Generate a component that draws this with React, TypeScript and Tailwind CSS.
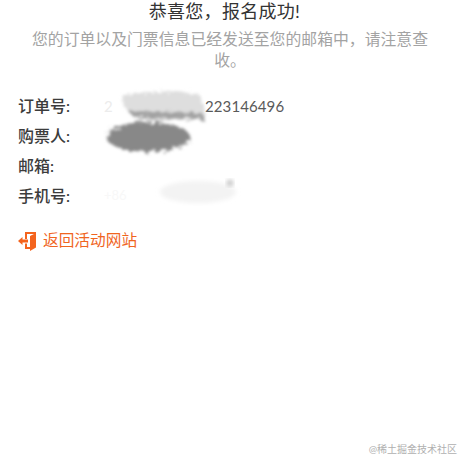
const cjk = "font-['Lato','Noto_Sans_CJK_SC',sans-serif]";

function ExitIcon() {
  return (
    <svg width="18" height="19" viewBox="0 0 18 19" className="mt-[2px] mr-[1px] shrink-0">
      {/* 门框 */}
      <path d="M7 0h11v2H9v5H7zM7 11.5h2V15h3v2H7z" fill="#f4641e" />
      {/* 门板 */}
      <path d="M18 1v14.5L12 19V4z" fill="#f4641e" />
      {/* 箭头 */}
      <path d="M0 9 4.5 5V7.5H10v3H4.5V13z" fill="#f4641e" />
    </svg>
  );
}

function Row({ label, children }: { label: string; children?: React.ReactNode }) {
  return (
    <div className="flex h-[30px] items-center">
      <span className="w-[86px] font-medium text-[#3c3c3c]">{label}</span>
      {children}
    </div>
  );
}

// 截图里的打码涂抹
function Smudges() {
  return (
    <svg width="460" height="460" className="absolute top-0 left-0">
      <defs>
        <filter id="rough" x="-20%" y="-40%" width="140%" height="180%">
          <feTurbulence type="fractalNoise" baseFrequency="0.18 0.35" numOctaves="3" seed="4" result="n" />
          <feDisplacementMap in="SourceGraphic" in2="n" scale="10" />
          <feGaussianBlur stdDeviation="1.5" />
        </filter>
        <filter id="soft">
          <feGaussianBlur stdDeviation="2" />
        </filter>
      </defs>
      <g filter="url(#rough)">
        <path d="M124 95 Q165 88 200 95 L207 120 L140 120 Q120 110 124 95z" fill="#dedede" />
        <path d="M128 111 L203 113 L204 119 L134 117z" fill="#a2a2a2" />
        <ellipse cx="148" cy="137" rx="42" ry="15" fill="#888888" />
      </g>
      <g filter="url(#soft)">
        <ellipse cx="198" cy="192" rx="38" ry="11" fill="#f3f3f3" />
      </g>
      <circle cx="230" cy="183" r="3.5" fill="#c8c8c8" filter="url(#soft)" />
    </svg>
  );
}

export default function App() {
  return (
    <div className={`relative h-[460px] w-[460px] overflow-hidden bg-white text-base ${cjk}`}>
      <h1 className="h-[23px] pr-[11px] text-center text-[18px] leading-[23px] font-normal tracking-[0.3px] text-[#333]">恭喜您，报名成功!</h1>
      <p className="mx-auto mt-[5px] w-[400px] text-center text-[15.85px] leading-[21px] text-[#a3a3a3]">
        您的订单以及门票信息已经发送至您的邮箱中，请注意查收。
      </p>
      <div className="mt-[21px] pl-[18px]">
        <Row label="订单号:">
          <span className="flex text-[15px] tracking-[0.1px]">
            <span className="w-[101px] text-[#ececec]">2</span>
            <span className="text-[#5a5a5a]">223146496</span>
          </span>
        </Row>
        <Row label="购票人:" />
        <Row label="邮箱:" />
        <Row label="手机号:">
          <span className="text-[13px] text-[#f8f8f8]">+86</span>
        </Row>
        <a className="mt-[18px] flex items-center gap-[6px] text-[#f0651f]">
          <ExitIcon />
          <span className="text-[15.7px]">返回活动网站</span>
        </a>
      </div>
      <Smudges />
      <span className="absolute right-[3px] bottom-[3px] text-[10px] text-[#b0b0b0]">@稀土掘金技术社区</span>
    </div>
  );
}
